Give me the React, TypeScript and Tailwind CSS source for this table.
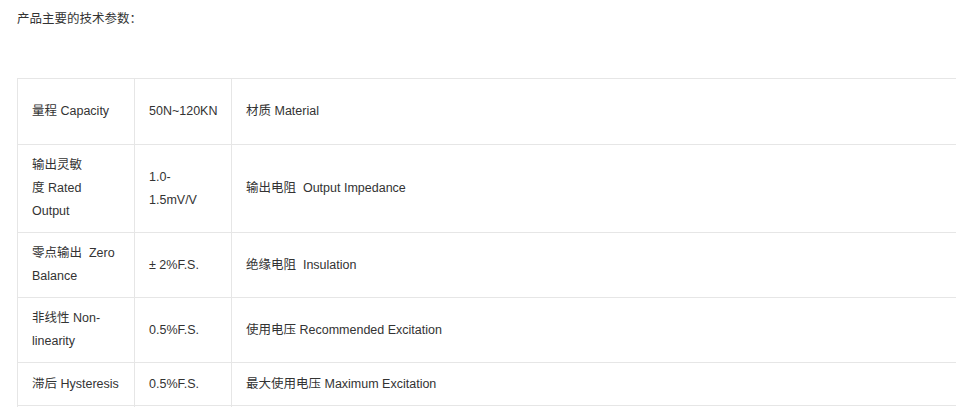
import React from "react";

const font = {
  fontFamily: '"Liberation Sans", Arial, "Noto Sans CJK SC", sans-serif',
};

type Row = { h: string; a: React.ReactNode; b: React.ReactNode; c: React.ReactNode };

const rows: Row[] = [
  { h: "h-[66px]", a: "量程 Capacity", b: "50N~120KN", c: "材质 Material" },
  {
    h: "h-[88px]",
    a: (
      <>
        输出灵敏
        <br />
        度 Rated
        <br />
        Output
      </>
    ),
    b: (
      <>
        1.0-
        <br />
        1.5mV/V
      </>
    ),
    c: "输出电阻\u00a0 Output Impedance",
  },
  {
    h: "h-[65px]",
    a: (
      <>
        零点输出{"\u00a0 "}Zero
        <br />
        Balance
      </>
    ),
    b: "± 2%F.S.",
    c: "绝缘电阻\u00a0 Insulation",
  },
  {
    h: "h-[65px]",
    a: (
      <>
        非线性 Non-
        <br />
        linearity
      </>
    ),
    b: "0.5%F.S.",
    c: "使用电压 Recommended Excitation",
  },
  { h: "h-[43px]", a: "滞后 Hysteresis", b: "0.5%F.S.", c: "最大使用电压 Maximum Excitation" },
  { h: "h-[43px]", a: "", b: "", c: "" },
];

export default function App() {
  return (
    <div
      className="w-[956px] h-[407px] overflow-hidden bg-white text-[12.5px] leading-[23px] text-[#333333]"
      style={font}
    >
      <div className="pl-[17px] pt-[8px]">
        <p className="whitespace-nowrap">产品主要的技术参数：</p>
        <table className="mt-[47px] w-[1000px] table-fixed border-collapse">
          <colgroup>
            <col className="w-[117px]" />
            <col className="w-[97px]" />
            <col />
          </colgroup>
          <tbody>
            {rows.map((r, i) => (
              <tr key={i} className={r.h}>
                <td className="border border-[#e6e6e6] px-[14px] py-[9px] align-middle whitespace-nowrap">
                  {r.a}
                </td>
                <td className="border border-[#e6e6e6] px-[14px] py-[9px] align-middle whitespace-nowrap">
                  {r.b}
                </td>
                <td className="border border-[#e6e6e6] px-[14px] py-[9px] align-middle whitespace-nowrap">
                  {r.c}
                </td>
              </tr>
            ))}
          </tbody>
        </table>
      </div>
    </div>
  );
}
